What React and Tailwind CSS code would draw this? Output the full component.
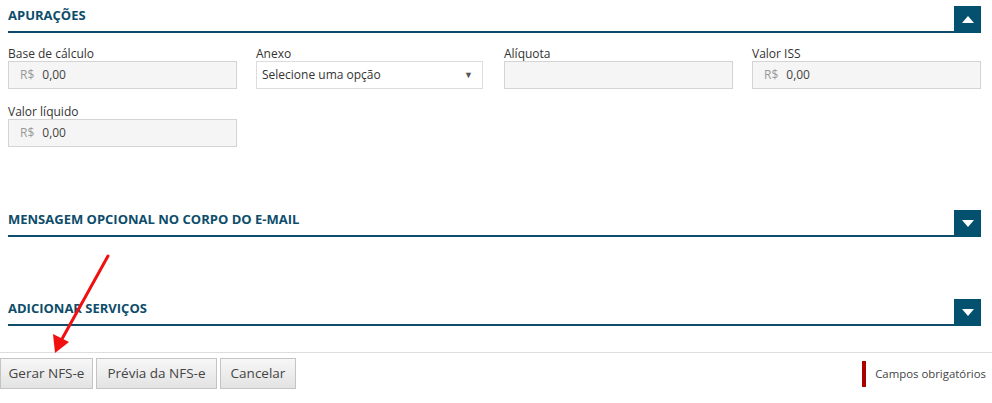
import React from "react";

const Toggle = ({ up }) => (
  <div className="w-[27px] h-[27px] bg-[#04506f] flex items-center justify-center shrink-0">
    <svg width="12" height="7" viewBox="0 0 12 7">
      <path d={up ? "M0 7L6 0L12 7Z" : "M0 0L12 0L6 7Z"} fill="#fff" />
    </svg>
  </div>
);

const SectionHeader = ({ title, up, className = "" }) => (
  <div className={`flex ml-2 mr-[11px] ${className}`}>
    <div className="flex-1 h-[27px] border-b-2 border-[#0d4d6b] text-[13px] leading-[18px] font-bold text-[#0d4d6b]">
      {title}
    </div>
    <Toggle up={up} />
  </div>
);

const Field = ({ label, children }) => (
  <div>
    <div className="text-[12px] leading-[15px] text-[#333]">{label}</div>
    {children}
  </div>
);

const Money = () => (
  <div className="h-[28px] bg-[#f5f5f5] border border-[#d4d4d4] flex items-center pl-[11px] text-[12px]">
    <span className="text-[#999]">R$</span>
    <span className="ml-[8px] text-[#444]">0,00</span>
  </div>
);

const Button = ({ children, className = "" }) => (
  <button className={`h-[31px] flex items-center justify-center bg-gradient-to-b from-[#f7f7f7] to-[#e3e3e3] border border-[#c4c4c4] text-[13.5px] text-[#444] ${className}`}>
    {children}
  </button>
);

export default function App() {
  return (
    <div className="relative w-[992px] h-[403px] bg-white overflow-hidden font-['Open_Sans',sans-serif]">
      <div className="pt-[6px]">
        <SectionHeader title="APURAÇÕES" up />
      </div>

      <div className="grid grid-cols-4 gap-x-[19px] gap-y-[15px] ml-2 mr-[11px] mt-[13px]">
        <Field label="Base de cálculo">
          <Money />
        </Field>
        <Field label="Anexo">
          <div className="h-[28px] w-[227px] bg-white border border-[#dcdcdc] flex items-center justify-between pl-[5px] pr-[9px] text-[12px] text-[#333]">
            <span>Selecione uma opção</span>
            <span className="text-[9px] text-[#555]">▼</span>
          </div>
        </Field>
        <Field label="Alíquota">
          <div className="h-[28px] bg-[#f5f5f5] border border-[#d4d4d4]" />
        </Field>
        <Field label="Valor ISS">
          <Money />
        </Field>
        <Field label="Valor líquido">
          <Money />
        </Field>
      </div>

      <SectionHeader title="MENSAGEM OPCIONAL NO CORPO DO E-MAIL" className="mt-[63px]" />
      <SectionHeader title="ADICIONAR SERVIÇOS" className="mt-[62px]" />

      <div className="mt-[26px] border-t border-[#dddddd] pt-[5px] flex justify-between">
        <div className="flex gap-[3px]">
          <Button className="w-[93px]">Gerar NFS-e</Button>
          <Button className="w-[121px]">Prévia da NFS-e</Button>
          <Button className="w-[76px]">Cancelar</Button>
        </div>
        <div className="flex items-center gap-[9px] pr-[6px] h-[31px]">
          <div className="w-[4px] h-[26px] bg-[#a90000]" />
          <span className="text-[11.4px] text-[#444]">Campos obrigatórios</span>
        </div>
      </div>

      <svg className="absolute inset-0 pointer-events-none" width="992" height="403">
        <line x1="108" y1="256" x2="62" y2="339" stroke="#f01010" strokeWidth="3" strokeLinecap="round" />
        <polygon points="55,353 53,334 69,342" fill="#f01010" />
      </svg>
    </div>
  );
}
